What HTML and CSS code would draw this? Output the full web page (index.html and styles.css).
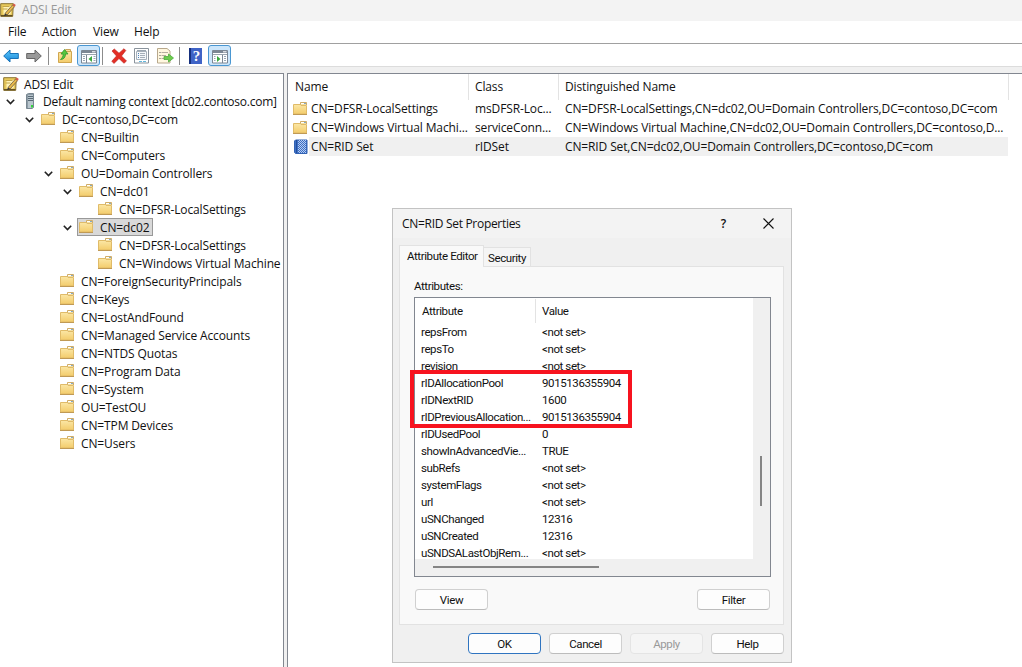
FILE: index.html
```html
<!DOCTYPE html>
<html lang="en">
<head>
    <meta charset="utf-8">
    <title>ADSI Edit</title>
    <link rel="stylesheet" href="styles.css">
</head>
<body>
    <!-- shared icons -->
    <svg class="defs" width="0" height="0">
        <defs>
            <linearGradient id="gold" x1="0" y1="0" x2="0" y2="1">
                <stop offset="0" stop-color="#fbe7a6"/>
                <stop offset="1" stop-color="#f3cc6b"/>
            </linearGradient>
            <linearGradient id="blue" x1="0" y1="0" x2="0" y2="1">
                <stop offset="0" stop-color="#5cc8fa"/>
                <stop offset="1" stop-color="#1684d8"/>
            </linearGradient>
        </defs>
        <symbol id="folder" viewBox="0 0 16 16">
            <path d="M7.500 4V1.500h6V4" fill="#f4dfa0" stroke="#d0ad68"/>
            <path d="M8 2.500h3" stroke="#fff"/>
            <path d="M11 2.500h2" stroke="#86a9c4"/>
            <path d="M.5 3.500h6.500l1 1h5.500v8.500H.5z" fill="url(#gold)" stroke="#e0bb68"/>
            <path d="M0 13.500h14" stroke="#c09a55"/>
        </symbol>
        <symbol id="edit" viewBox="0 0 16 16">
            <path d="M.7 1.700h12.600l-.6 12.600H.7z" fill="#e8c95a" stroke="#8b7330"/>
            <path d="M3.500 4h8l-1 8.500h-7z" fill="#fff3b8"/>
            <path d="M1 13.700h11.500" stroke="#665122" stroke-width="1.500"/>
            <path d="M2.500 4.500h7M2.500 7h5" stroke="#c3a54a"/>
            <path d="M5 11.500l7.500-8.500 2 1.700L7 13z" fill="#e9b94a" stroke="#6b5840" stroke-width=".8"/>
            <path d="M12.500 3l1.300-1.600 2 1.700-1.300 1.600z" fill="#d65a4a"/>
            <path d="M5 11.500L4 14l3-1z" fill="#333"/>
        </symbol>
        <symbol id="server" viewBox="0 0 16 16">
            <path d="M.5 1.500l2-1h5v14l-1.500 1H.5z" fill="#8e9ca6" stroke="#788791"/>
            <path d="M2 2h5v13H2z" fill="#b9c6ce"/>
            <path d="M2 3.500h5M2 5.500h5M2 7.500h5" stroke="#596975"/>
            <path d="M5 12h2v2.500H5z" fill="#35d23c"/>
        </symbol>
        <symbol id="book" viewBox="0 0 16 16">
            <path d="M1.500 2l1-1h11.500v13.500H2.500l-1-1z" fill="#3d6fc4" stroke="#3263b4"/>
            <path d="M5.500 2v12M7.500 2v12M9.500 2v12M11.500 2v12" stroke="#b5ccf2" stroke-dasharray="1 1"/>
            <path d="M6.500 1v13M8.500 1v13M10.500 1v13M12.500 1v13" stroke="#b5ccf2" stroke-dasharray="1 1"/>
            <path d="M3.500 1v13" stroke="#234f9c"/>
        </symbol>
        <symbol id="chevron" viewBox="0 0 9 6">
            <path d="M.8 .8l3.700 3.700L8.200 .8" fill="none" stroke="#222" stroke-width="1.600"/>
        </symbol>
        <symbol id="console" viewBox="0 0 16 14">
            <path d="M.5 .5h15v12.500H.5z" fill="#fff" stroke="#7c8794"/>
            <path d="M1 2h14" stroke="#7c8794" stroke-width="2"/>
            <path d="M1 4.500h14" stroke="#9aa5af"/>
            <path d="M11 1.800h3.500" stroke="#fff"/>
        </symbol>
    </svg>

    <div class="window">
        <header class="title-bar">
            <svg class="icon title-icon"><use href="#edit"/></svg>
            <span>ADSI Edit</span>
        </header>

        <nav class="menu-bar">
            <span class="menu-file">File</span>
            <span class="menu-action">Action</span>
            <span class="menu-view">View</span>
            <span>Help</span>
        </nav>

        <div class="toolbar">
            <svg class="back" width="16" height="14"><path d="M.7 7L7 1v3.500h8.300v5H7V13z" stroke-linejoin="round"/></svg>
            <svg class="forward" width="16" height="14"><path d="M15.300 7L9 1v3.500H.7v5H9V13z" stroke-linejoin="round"/></svg>
            <i class="separator"></i>
            <svg class="up" width="16" height="16" viewBox="0 0 16 16">
                <path d="M8.500 3V1.500h5V4" fill="#f4dfa0" stroke="#c9a45a"/>
                <path d="M1.500 4.500h5l1-1h7v11h-13z" fill="url(#gold)" stroke="#d1a64e"/>
                <path d="M3.500 11.500c3 0 5-2 5-5.500h2.500L7.500 1.500 4 6h2.200c0 2.500-1 4-2.700 5.500z" fill="#55c83e" stroke="#2f9630" stroke-width=".8"/>
            </svg>
            <span class="tool-toggle">
                <svg width="16" height="14">
                    <use href="#console"/>
                    <path d="M5.500 5v8" stroke="#7c8794"/>
                    <path d="M2 6.500h2M2 8.500h2M2 10.500h2M12.500 6.500h2M12.500 8.500h2M12.500 10.500h2" stroke="#98a6b5"/>
                    <path d="M11 6v6L7.500 9z" fill="#39a83d"/>
                </svg>
            </span>
            <i class="separator near"></i>
            <svg class="delete" width="16" height="16" viewBox="0 0 16 16">
                <path d="M1 3l2.300-2L8 5.200 13 .7l1.800 1.800L10.500 8l5 5-2.500 2.300-5-4.800L3 15.500 .8 13.200 5.500 8z" fill="#e32e25" stroke="#b8201b" stroke-width=".6"/>
            </svg>
            <svg class="properties" width="16" height="16" viewBox="0 0 16 16">
                <path d="M.5 .5h14v14.500H.5z" fill="#fff" stroke="#8a939c"/>
                <path d="M2.500 3.500h10v8h-10z" fill="#f4f7fa" stroke="#a6b0ba"/>
                <path d="M3 2.500h9" stroke="#9aa5b0"/>
                <path d="M4 5.500h1M4 7.500h1M4 9.500h1" stroke="#4c82b8"/>
                <path d="M6 5.500h5M6 7.500h5M6 9.500h5" stroke="#a5afb9"/>
                <path d="M5 13.500h3M9 13.500h3" stroke="#65b8dc"/>
            </svg>
            <svg class="export" width="17" height="16" viewBox="0 0 17 16">
                <path d="M.5 .5h9.500l3 2.500v12H.5z" fill="#fff7df" stroke="#b8a88c"/>
                <path d="M2.500 4.500h1M2.500 7.500h1M2.500 10.500h1" stroke="#555"/>
                <path d="M4.500 4.500H11M4.500 7.500H9M4.500 10.500H8" stroke="#b5ad9d"/>
                <path d="M7 8.500h4.500V6l5 4-5 4v-2.500H7z" fill="#6dcc4c" stroke="#4bab3c" stroke-width=".8"/>
            </svg>
            <i class="separator"></i>
            <span class="help">?</span>
            <span class="tool-toggle last">
                <svg width="16" height="14">
                    <use href="#console"/>
                    <path d="M10.500 5v8" stroke="#7c8794"/>
                    <path d="M2 6.500h1.500M2 8.500h1.500M2 10.500h1.500M12 6.500h2M12 8.500h2M12 10.500h2" stroke="#98a6b5"/>
                    <path d="M5 6v6l3.500-3z" fill="#39a83d"/>
                </svg>
            </span>
        </div>

        <main class="panes">
            <ul class="tree">
                <li class="root"><svg class="icon"><use href="#edit"/></svg><span class="label">ADSI Edit</span></li>
                <li class="level-0"><svg class="chevron"><use href="#chevron"/></svg><svg class="icon"><use href="#server"/></svg><span class="label context">Default naming context [dc02.contoso.com]</span></li>
                <li class="level-1"><svg class="chevron"><use href="#chevron"/></svg><svg class="icon"><use href="#folder"/></svg><span class="label">DC=contoso,DC=com</span></li>
                <li class="level-2"><svg class="icon"><use href="#folder"/></svg><span class="label">CN=Builtin</span></li>
                <li class="level-2"><svg class="icon"><use href="#folder"/></svg><span class="label">CN=Computers</span></li>
                <li class="level-2"><svg class="chevron"><use href="#chevron"/></svg><svg class="icon"><use href="#folder"/></svg><span class="label">OU=Domain Controllers</span></li>
                <li class="level-3"><svg class="chevron"><use href="#chevron"/></svg><svg class="icon"><use href="#folder"/></svg><span class="label">CN=dc01</span></li>
                <li class="level-4"><svg class="icon"><use href="#folder"/></svg><span class="label">CN=DFSR-LocalSettings</span></li>
                <li class="level-3"><svg class="chevron"><use href="#chevron"/></svg><span class="selected"><svg class="icon"><use href="#folder"/></svg><span class="label">CN=dc02</span></span></li>
                <li class="level-4"><svg class="icon"><use href="#folder"/></svg><span class="label">CN=DFSR-LocalSettings</span></li>
                <li class="level-4"><svg class="icon"><use href="#folder"/></svg><span class="label">CN=Windows Virtual Machine</span></li>
                <li class="level-2"><svg class="icon"><use href="#folder"/></svg><span class="label">CN=ForeignSecurityPrincipals</span></li>
                <li class="level-2"><svg class="icon"><use href="#folder"/></svg><span class="label">CN=Keys</span></li>
                <li class="level-2"><svg class="icon"><use href="#folder"/></svg><span class="label">CN=LostAndFound</span></li>
                <li class="level-2"><svg class="icon"><use href="#folder"/></svg><span class="label">CN=Managed Service Accounts</span></li>
                <li class="level-2"><svg class="icon"><use href="#folder"/></svg><span class="label">CN=NTDS Quotas</span></li>
                <li class="level-2"><svg class="icon"><use href="#folder"/></svg><span class="label">CN=Program Data</span></li>
                <li class="level-2"><svg class="icon"><use href="#folder"/></svg><span class="label">CN=System</span></li>
                <li class="level-2"><svg class="icon"><use href="#folder"/></svg><span class="label">OU=TestOU</span></li>
                <li class="level-2"><svg class="icon"><use href="#folder"/></svg><span class="label">CN=TPM Devices</span></li>
                <li class="level-2"><svg class="icon"><use href="#folder"/></svg><span class="label">CN=Users</span></li>
            </ul>

            <section class="details">
                <div class="columns">
                    <span>Name</span>
                    <span>Class</span>
                    <span>Distinguished Name</span>
                </div>
                <div class="entry">
                    <svg class="icon"><use href="#folder"/></svg>
                    <span>CN=DFSR-LocalSettings</span>
                    <span>msDFSR-Loc...</span>
                    <span>CN=DFSR-LocalSettings,CN=dc02,OU=Domain Controllers,DC=contoso,DC=com</span>
                </div>
                <div class="entry">
                    <svg class="icon"><use href="#folder"/></svg>
                    <span>CN=Windows Virtual Machi...</span>
                    <span>serviceConn...</span>
                    <span>CN=Windows Virtual Machine,CN=dc02,OU=Domain Controllers,DC=contoso,D...</span>
                </div>
                <div class="entry current">
                    <svg class="icon"><use href="#book"/></svg>
                    <span>CN=RID Set</span>
                    <span>rIDSet</span>
                    <span>CN=RID Set,CN=dc02,OU=Domain Controllers,DC=contoso,DC=com</span>
                </div>
            </section>
        </main>
    </div>

    <div class="dialog">
        <div class="dialog-title">
            <span class="dialog-name">CN=RID Set Properties</span>
            <span class="dialog-help">?</span>
            <svg class="close" width="11" height="11" viewBox="0 0 11 11"><path d="M.5 .5l10 10M10.500 .5l-10 10" stroke="#111" stroke-width="1.100"/></svg>
        </div>

        <div class="tabs">
            <span class="tab active">Attribute Editor</span>
            <span class="tab">Security</span>
        </div>

        <div class="tab-page">
            <div class="caption">Attributes:</div>
            <div class="attributes">
                <div class="attribute-list">
                    <div class="attribute-head"><span>Attribute</span><span>Value</span></div>
                    <div class="attribute"><span>repsFrom</span><span>&lt;not set&gt;</span></div>
                    <div class="attribute"><span>repsTo</span><span>&lt;not set&gt;</span></div>
                    <div class="attribute"><span>revision</span><span>&lt;not set&gt;</span></div>
                    <div class="attribute"><span>rIDAllocationPool</span><span>9015136355904</span></div>
                    <div class="attribute"><span>rIDNextRID</span><span>1600</span></div>
                    <div class="attribute"><span>rIDPreviousAllocation...</span><span>9015136355904</span></div>
                    <div class="attribute"><span>rIDUsedPool</span><span>0</span></div>
                    <div class="attribute"><span>showInAdvancedVie...</span><span>TRUE</span></div>
                    <div class="attribute"><span>subRefs</span><span>&lt;not set&gt;</span></div>
                    <div class="attribute"><span>systemFlags</span><span>&lt;not set&gt;</span></div>
                    <div class="attribute"><span>url</span><span>&lt;not set&gt;</span></div>
                    <div class="attribute"><span>uSNChanged</span><span>12316</span></div>
                    <div class="attribute"><span>uSNCreated</span><span>12316</span></div>
                    <div class="attribute"><span>uSNDSALastObjRem...</span><span>&lt;not set&gt;</span></div>
                </div>
                <div class="scroll-y"><i></i></div>
                <div class="scroll-x"><i></i></div>
                <div class="highlight"></div>
            </div>
            <div class="page-buttons">
                <button>View</button>
                <button>Filter</button>
            </div>
        </div>

        <div class="dialog-buttons">
            <button class="default">OK</button>
            <button>Cancel</button>
            <button disabled>Apply</button>
            <button>Help</button>
        </div>
    </div>
</body>
</html>
```
FILE: styles.css
```css
* {
    box-sizing: border-box;
}

body {
    margin: 0;
    width: 1022px;
    height: 667px;
    overflow: hidden;
    background-color: #fff;
    color: #111;
    font-family: "Open Sans", "Noto Sans", sans-serif;
    font-size: 12px;
    letter-spacing: -0.13px;
    white-space: nowrap;
}

svg {
    flex: none;
    display: block;
}

.defs {
    position: absolute;
}

.icon {
    width: 16px;
    height: 16px;
}

.window {
    display: flex;
    flex-direction: column;
    height: 667px;
}

.title-bar {
    display: flex;
    align-items: center;
    height: 21px;
    padding-bottom: 2px;
    background-color: #f3f3f3;
    color: #999;
}

.title-icon {
    margin-right: 6px;
}

.menu-bar {
    display: flex;
    align-items: center;
    height: 23px;
    padding: 0 0 2px 8px;
    border-bottom: 1px solid #a0a0a0;
}

.menu-file {
    width: 34px;
}

.menu-action {
    width: 51px;
}

.menu-view {
    width: 41px;
}

/* toolbar */

.toolbar {
    display: flex;
    align-items: center;
    height: 23px;
    padding: 1px 0 0 3px;
    border-bottom: 1px solid #dcdcdc;
}

.toolbar > svg {
    margin-top: 1px;
}

.back {
    fill: url(#blue);
    stroke: #1672b8;
}

.forward {
    margin-left: 7px;
    fill: #999;
    stroke: #656565;
}

.separator {
    width: 1px;
    height: 18px;
    margin: 0 8px 0 6px;
    background-color: #8c8c8c;
}

.separator.near {
    margin: 0 8px 0 2px;
}

.tool-toggle {
    display: flex;
    align-items: center;
    justify-content: center;
    width: 23px;
    height: 21px;
    margin-left: 4px;
    padding-top: 3px;
    border: 1px solid #4a97d2;
    border-radius: 3px;
    background-color: #cce6fb;
}

.properties {
    margin-left: 7px;
}

.export {
    margin-left: 7px;
}

.toolbar .export + .separator {
    margin-left: 5px;
}

.help {
    width: 13px;
    height: 16px;
    margin-left: 1px;
    border-left: 2px solid #16307e;
    background-color: #3f63c6;
    color: #fff;
    font-family: "Liberation Serif", serif;
    font-size: 15px;
    font-weight: bold;
    line-height: 16px;
    text-align: center;
}

.tool-toggle.last {
    margin-left: 6px;
}

/* panes */

.panes {
    display: flex;
    flex: 1;
    padding-top: 6px;
    background-color: #f0f0f0;
}

.tree {
    width: 284px;
    margin: 0;
    padding: 0;
    border: 1px solid #828790;
    border-width: 1px 1px 0 0;
    background-color: #fff;
    list-style: none;
}

.tree li {
    display: flex;
    align-items: center;
    height: 18px;
}

.tree .label {
    margin-left: 5px;
}

.chevron {
    width: 9px;
    height: 6px;
    margin: 2px 11px 0 -20px;
}

.tree .root {
    padding: 2px 0 0 3px;
}

.level-0 {
    padding-left: 26px;
}

.tree .context {
    margin-left: 1px;
    letter-spacing: -0.25px;
}

.level-1 {
    padding-left: 41px;
}

.level-1 .chevron {
    margin-left: -16px;
    margin-right: 7px;
}

.level-2 {
    padding-left: 60px;
}

.level-3 {
    padding-left: 79px;
}

.level-2 .chevron,
.level-3 .chevron {
    margin-left: -16px;
    margin-right: 7px;
}

.level-4 {
    padding-left: 98px;
}

.selected {
    display: flex;
    align-items: center;
    height: 18px;
    margin-left: -2px;
    padding: 0 3px 0 1px;
    border: 1px solid #999;
    background-color: #d9d9d9;
}

.details {
    flex: 1;
    margin-left: 3px;
    border: 1px solid #828790;
    border-width: 1px 0 0 1px;
    background-color: #fff;
}

.columns {
    display: grid;
    grid-template-columns: 181px 90px 450px;
    height: 25px;
}

.columns span {
    padding-left: 7px;
    border-right: 1px solid #e3e3e3;
    line-height: 26px;
}

.columns span:nth-child(2),
.columns span:nth-child(3) {
    padding-left: 6px;
}

.entry {
    display: grid;
    grid-template-columns: 18px 164px 90px 444px;
    align-items: center;
    width: 720px;
    height: 19px;
    padding-left: 5px;
}

.current {
    background: linear-gradient(to right, #fff 21px, #f0f0f0 21px);
}

/* properties dialog */

.dialog {
    position: absolute;
    left: 392px;
    top: 208px;
    width: 400px;
    height: 455px;
    border: 1px solid #c3c3c3;
    background-color: #f0f0f0;
}

.dialog-title {
    display: flex;
    align-items: center;
    height: 29px;
    padding: 0 17px 0 9px;
    background-color: #f3f3f3;
}

.dialog-name {
    flex: 1;
    letter-spacing: -0.3px;
}

.dialog-help {
    margin-right: 37px;
    font-weight: 600;
}

.tabs,
.tab-page,
.dialog-buttons {
    font-family: Roboto, "Liberation Sans", sans-serif;
    font-size: 11.5px;
    letter-spacing: -0.4px;
}

.tabs {
    display: flex;
    align-items: flex-end;
    height: 28px;
    padding-left: 6px;
}

.tab {
    width: 47px;
    height: 19px;
    padding-left: 4px;
    border: 1px solid #e2e2e2;
    border-width: 1px 1px 0 0;
    background-color: #f5f5f5;
    line-height: 20px;
}

.tab.active {
    position: relative;
    z-index: 1;
    width: 85px;
    height: 22px;
    margin-bottom: -1px;
    padding-left: 7px;
    border-left-width: 1px;
    background-color: #f9f9f9;
}

.tab-page {
    width: 385px;
    height: 359px;
    margin-left: 6px;
    padding: 12px 12px 0 14px;
    border: 1px solid #e2e2e2;
    background-color: #f9f9f9;
}

.caption {
    height: 18px;
    line-height: 14px;
}

.attributes {
    position: relative;
    display: grid;
    grid-template: 261px 16px / 338px 16px;
    width: 357px;
    height: 280px;
    border: 1px solid #828790;
    background-color: #f0f0f0;
}

.attribute-list {
    overflow: hidden;
    background-color: #fff;
}

.attribute-head,
.attribute {
    display: grid;
    grid-template-columns: 121px 1fr;
}

.attribute-head {
    height: 26px;
    padding-top: 1px;
    line-height: 25px;
}

.attribute-head span {
    padding-left: 7px;
}

.attribute-head span:first-child {
    height: 24px;
    border-right: 1px solid #e3e3e3;
}

.attribute-head span:last-child {
    padding-left: 6px;
}

.attribute {
    height: 17px;
    padding-left: 6px;
    line-height: 17px;
}

.scroll-y i {
    display: block;
    width: 2px;
    height: 50px;
    margin: 158px 0 0 7px;
    background-color: #858585;
}

.scroll-x i {
    display: block;
    width: 166px;
    height: 2px;
    margin: 7px 0 0 18px;
    background-color: #858585;
}

/* marks the RID pool rows */
.highlight {
    position: absolute;
    left: -5px;
    top: 72px;
    width: 222px;
    height: 58px;
    border: 4px solid #f7131f;
}

.page-buttons {
    display: flex;
    justify-content: space-between;
    padding: 12px 1px 0 1px;
}

button {
    width: 73px;
    height: 21px;
    padding: 0;
    border: 1px solid #d0d0d0;
    border-bottom-color: #bcbcbc;
    border-radius: 4px;
    background-color: #fdfdfd;
    color: #111;
    font: inherit;
    letter-spacing: inherit;
}

button.default {
    border-color: #2f74c0;
}

button:disabled {
    border-color: #e4e4e4;
    background-color: #f5f5f5;
    color: #999;
}

.dialog-buttons {
    display: flex;
    justify-content: flex-end;
    gap: 8px;
    padding: 8px 7px 0 0;
}
```
